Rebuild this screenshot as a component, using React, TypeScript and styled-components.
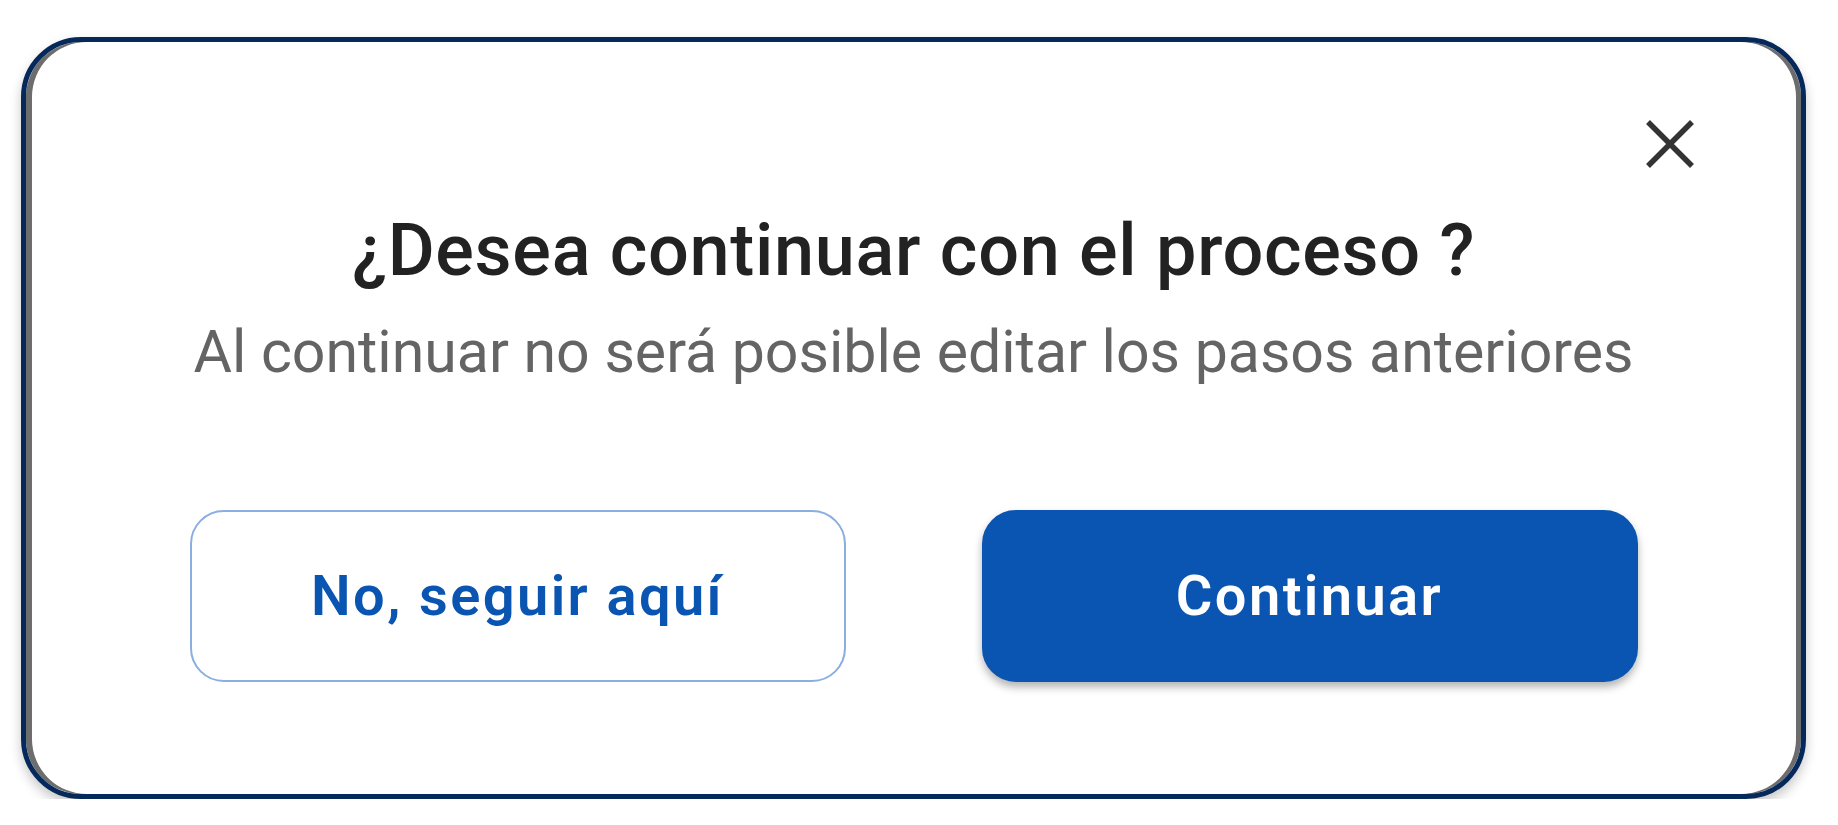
import React from "react";
import styled, { createGlobalStyle } from "styled-components";

const GlobalStyle = createGlobalStyle`
  html, body {
    margin: 0;
    padding: 0;
    background: #ffffff;
  }
  body {
    font-family: Roboto, "Liberation Sans", sans-serif;
  }
  * { box-sizing: border-box; }
`;

const Page = styled.div`
  padding: 37px 0 0 21px;
`;

const Card = styled.div`
  width: 1785px;
  height: 762px;
  border: 5px solid #05295a;
  border-radius: 60px;
  background: #ffffff;
  box-shadow:
    0 6px 12px rgba(0, 0, 0, 0.22),
    inset 6px 0 0 #6d6d6d,
    inset -5px 0 0 #6d6d6d;
  display: flex;
  flex-direction: column;
  align-items: center;
`;

const Header = styled.div`
  align-self: stretch;
  display: flex;
  justify-content: flex-end;
  padding: 77px 106px 0 0;
`;

const CloseButton = styled.button`
  width: 50px;
  height: 50px;
  padding: 0;
  border: none;
  background: transparent;
  cursor: pointer;
  display: flex;
  svg { display: block; }
`;

const Title = styled.h2`
  margin: 46px 0 0;
  font-family: Roboto, "Liberation Sans", sans-serif;
  font-weight: 500;
  font-size: 72px;
  line-height: 72px;
  letter-spacing: 0.7px;
  color: #222222;
  text-align: center;
`;

const Subtitle = styled.p`
  margin: 35px 0 0;
  font-family: Roboto, "Liberation Sans", sans-serif;
  font-weight: 400;
  font-size: 59px;
  line-height: 59px;
  color: #646464;
  text-align: center;
`;

const Actions = styled.div`
  margin-top: 129px;
  display: flex;
  justify-content: center;
  gap: 136px;
`;

const ActionButton = styled.button<{ $primary?: boolean }>`
  width: 656px;
  height: 172px;
  border-radius: 34px;
  font-family: Roboto, "Liberation Sans", sans-serif;
  font-weight: 600;
  font-size: 56px;
  line-height: 56px;
  letter-spacing: 2.4px;
  cursor: pointer;
  display: flex;
  align-items: center;
  justify-content: center;
  border: 2px solid ${(p) => (p.$primary ? "#0a55b1" : "#8aaee2")};
  background: ${(p) => (p.$primary ? "#0a55b1" : "#ffffff")};
  color: ${(p) => (p.$primary ? "#ffffff" : "#0a55b1")};
  box-shadow: ${(p) => (p.$primary ? "0 5px 9px rgba(0,0,0,0.3)" : "none")};
`;

export default function App() {
  return (
    <>
      <GlobalStyle />
      <Page>
        <Card>
          <Header>
            <CloseButton aria-label="Cerrar">
              <svg width="50" height="50" viewBox="0 0 50 50">
                <path d="M3 3 L47 47 M47 3 L3 47" stroke="#333333" strokeWidth="5.5" fill="none" />
              </svg>
            </CloseButton>
          </Header>
          <Title>¿Desea continuar con el proceso ?</Title>
          <Subtitle>Al continuar no será posible editar los pasos anteriores</Subtitle>
          <Actions>
            <ActionButton>No, seguir aquí</ActionButton>
            <ActionButton $primary>Continuar</ActionButton>
          </Actions>
        </Card>
      </Page>
    </>
  );
}
